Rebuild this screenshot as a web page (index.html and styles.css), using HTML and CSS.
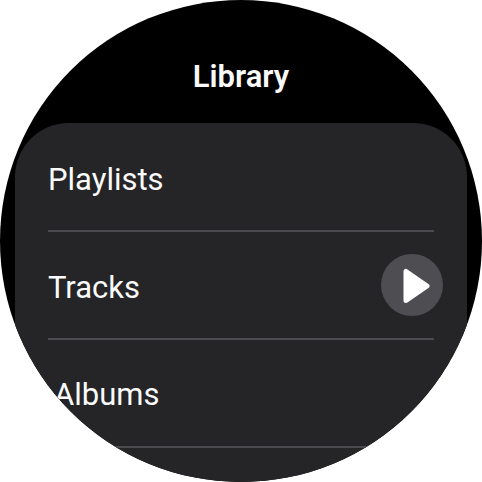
FILE: index.html
```
<!DOCTYPE html>
<html lang="en">

<head>
	<title>Library</title>

	<meta charset="UTF-8">
	<meta name="viewport" content="width=device-width,initial-scale=1">

	<link rel="stylesheet" href="styles.css">
</head>

<body>

	<main class="watch">
		<h1 class="title">Library</h1>

		<ul class="list">
			<li class="item"><a href="#playlists">Playlists</a></li>
			<li class="item">
				<a href="#tracks">Tracks</a>
				<button class="play" type="button" aria-label="Play all tracks">
					<svg viewBox="0 0 62 62" aria-hidden="true">
						<path d="M25 17.5V46.5L46 32Z" />
					</svg>
				</button>
			</li>
			<li class="item edge"><a href="#albums">Albums</a></li>
		</ul>
	</main>

</body>

</html>
```

FILE: styles.css
```
body {
	margin: 0;
	background-color: white;
	font-family: Roboto, "Liberation Sans", sans-serif;
}

/* round screen */
.watch {
	display: flex;
	flex-direction: column;
	width: 100%;
	aspect-ratio: 1;
	border-radius: 50%;
	overflow: hidden;
	background-color: black;
	color: #fafafa;
}

.title {
	margin: 0;
	padding: 59px 0 28px;
	font-size: 31px;
	line-height: 36px;
	font-weight: 600;
	text-align: center;
}

.list {
	flex: 1 0 auto;
	margin: 0 15px;
	padding: 1px 33px 0;
	list-style: none;
	border-radius: 54px 54px 0 0;
	background-color: #252527;
}

.item {
	display: flex;
	align-items: center;
	justify-content: space-between;
	height: 106px;
	border-bottom: 2px solid #4b4b4f;
}

.item a {
	flex: 1;
	padding-top: 5px;
	color: inherit;
	font-size: 31px;
	line-height: 36px;
	text-decoration: none;
}

.edge a {
	padding: 3px 0 0 6px;
}

.play {
	width: 62px;
	height: 62px;
	margin-right: -9px;
	padding: 0;
	border: 0;
	border-radius: 50%;
	background-color: #4e4d52;
	cursor: pointer;
}

.play svg {
	display: block;
	fill: white;
	stroke: white;
	stroke-width: 5;
	stroke-linejoin: round;
}
```
